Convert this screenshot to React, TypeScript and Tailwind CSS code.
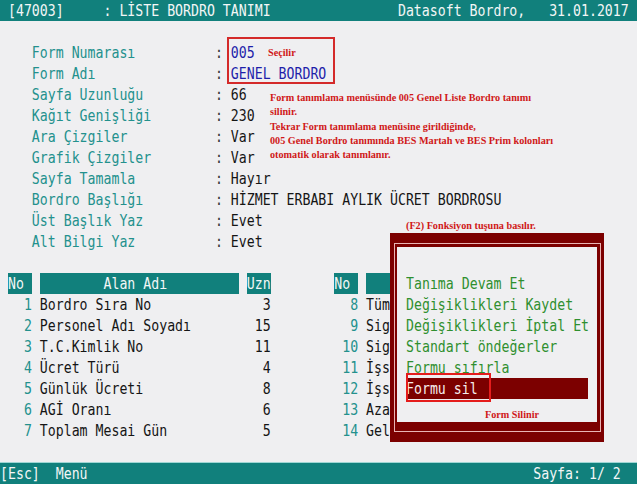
import type { ReactNode } from 'react';

/**
 * Datasoft Bordro – Liste Bordro Tanımı (DOS-style text screen)
 * 80 columns x 23 rows, each cell ~7.96 x 21 px.
 */

const TEAL_TXT = 'text-[#23918d]';
const INK = 'text-[#151515]';
const BLUE = 'text-[#1e1eaa]';
const BAR = 'bg-[#11807c]';
const WHITE = 'text-[#f3f6f6]';
const GREEN = 'text-[#2f8f2f]';

function Seg({ t, c = '', bg = '' }: { t: string; c?: string; bg?: string }) {
  return (
    <span className={`inline-block h-[21px] whitespace-pre ${c} ${bg}`}>
      <span className="inline-block scale-y-[1.2]">{t}</span>
    </span>
  );
}

function Line({ children, className = '' }: { children?: ReactNode; className?: string }) {
  return <div className={`flex h-[21px] ${className}`}>{children}</div>;
}

const fields: { label: string; value: string; blue?: boolean }[] = [
  { label: 'Form Numarası', value: '005', blue: true },
  { label: 'Form Adı', value: 'GENEL BORDRO', blue: true },
  { label: 'Sayfa Uzunluğu', value: '66' },
  { label: 'Kağıt Genişliği', value: '230' },
  { label: 'Ara Çizgiler', value: 'Var' },
  { label: 'Grafik Çizgiler', value: 'Var' },
  { label: 'Sayfa Tamamla', value: 'Hayır' },
  { label: 'Bordro Başlığı', value: 'HİZMET ERBABI AYLIK ÜCRET BORDROSU' },
  { label: 'Üst Başlık Yaz', value: 'Evet' },
  { label: 'Alt Bilgi Yaz', value: 'Evet' },
];

const leftCols: [number, string, number][] = [
  [1, 'Bordro Sıra No', 3],
  [2, 'Personel Adı Soyadı', 15],
  [3, 'T.C.Kimlik No', 11],
  [4, 'Ücret Türü', 4],
  [5, 'Günlük Ücreti', 8],
  [6, 'AGİ Oranı', 6],
  [7, 'Toplam Mesai Gün', 5],
];

// only the first letters show; the rest sits under the F2 menu
const rightCols: [number, string][] = [
  [8, 'Tüm'],
  [9, 'Sig'],
  [10, 'Sig'],
  [11, 'İşs'],
  [12, 'İşs'],
  [13, 'Aza'],
  [14, 'Gel'],
];

const menu = [
  'Tanıma Devam Et',
  'Değişiklikleri Kaydet',
  'Değişiklikleri İptal Et',
  'Standart öndeğerler',
  'Formu sıfırla',
];

export default function App() {
  return (
    <div className="relative w-[637px] h-[484px] overflow-hidden bg-[#efeff1] font-['DejaVu_Sans_Mono',monospace] text-[13.225px] leading-[21px]">
      {/* Title bar */}
      <Line className={`${BAR} ${WHITE}`}>
        <Seg t={' [47003]     : LİSTE BORDRO TANIMI'.padEnd(50)} />
        <Seg t="Datasoft Bordro,   31.01.2017 " />
      </Line>
      <Line />

      {/* Form fields */}
      {fields.map((f) => (
        <Line key={f.label}>
          <Seg t={'    ' + f.label.padEnd(23)} c={TEAL_TXT} />
          <Seg t=": " c="text-[#3a3a3a]" />
          <Seg t={f.value} c={f.blue ? BLUE : INK} />
        </Line>
      ))}
      <Line />

      {/* Column headers */}
      <Line>
        <Seg t=" " />
        <Seg t="No " c={WHITE} bg={BAR} />
        <Seg t=" " />
        <Seg t={'        Alan Adı         '} c={WHITE} bg={BAR} />
        <Seg t=" " />
        <Seg t="Uzn" c={WHITE} bg={BAR} />
        <Seg t={'        '} />
        <Seg t="No " c={WHITE} bg={BAR} />
        <Seg t=" " />
        <Seg t={'    '} bg={BAR} />
      </Line>

      {/* Column rows */}
      {leftCols.map(([n, name, uzn], i) => (
        <Line key={n}>
          <Seg t={String(n).padStart(4)} c={TEAL_TXT} />
          <Seg t={' ' + name.padEnd(25) + ' ' + String(uzn).padStart(3)} c={INK} />
          <Seg t={String(rightCols[i][0]).padStart(11)} c={TEAL_TXT} />
          <Seg t={' ' + rightCols[i][1]} c={INK} />
        </Line>
      ))}
      <Line />

      {/* Bottom bar */}
      <div className={`flex h-[22px] border-t border-[#9fd6d4] ${BAR} ${WHITE}`}>
        <Seg t={'[Esc]  Menü'.padEnd(67)} />
        <Seg t="Sayfa: 1/ 2" />
      </div>

      {/* Annotation: selected form */}
      <div className="absolute left-[227px] top-[37px] w-[108px] h-[47px] border-2 border-[#d42a2a]" />
      <div className="absolute left-[268px] top-[46px] font-['Liberation_Serif',serif] font-bold text-[10.2px] leading-[14px] text-[#d01818]">
        Seçilir
      </div>
      <div className="absolute left-[270px] top-[91px] font-['Liberation_Serif',serif] font-bold text-[10.2px] leading-[14.3px] text-[#d01818]">
        <div>Form tanımlama menüsünde 005 Genel Liste Bordro tanımı</div>
        <div>silinir.</div>
        <div>Tekrar Form tanımlama menüsine girildiğinde,</div>
        <div>005 Genel Bordro tanımında BES Martah ve BES Prim kolonları</div>
        <div>otomatik olarak tanımlanır.</div>
      </div>
      <div className="absolute left-[406px] top-[219px] font-['Liberation_Serif',serif] font-bold text-[10.2px] leading-[14px] text-[#d01818]">
        (F2) Fonksiyon tuşuna basılır.
      </div>

      {/* F2 popup menu */}
      <div className="absolute left-[390px] top-[233px] w-[214px] h-[209px] bg-[#7c0000] pl-[4px] pr-[3px] pt-[10px] pb-[10px]">
        <div className="h-full border border-[#e9b4b4] bg-[#7c0000] pl-[2px] pr-[3px] pt-[3px] pb-[9px]">
          <div className="relative h-full bg-[#efeff1] pl-[9px] pt-[26px]">
            {menu.map((m) => (
              <Line key={m}>
                <Seg t={m} c={GREEN} />
              </Line>
            ))}
            <div className="relative flex h-[21px] w-[182px] bg-[#7c0000]">
              <Seg t="Formu sil" c="text-[#f6ecec]" />
              <div className="absolute left-0 top-[-5px] w-[85px] h-[29px] border-2 border-[#e51c1c]" />
            </div>
            <div className="absolute left-[88px] top-[161px] font-['Liberation_Serif',serif] font-bold text-[10.2px] leading-[14px] text-[#d01818]">
              Form Silinir
            </div>
          </div>
        </div>
      </div>
    </div>
  );
}
